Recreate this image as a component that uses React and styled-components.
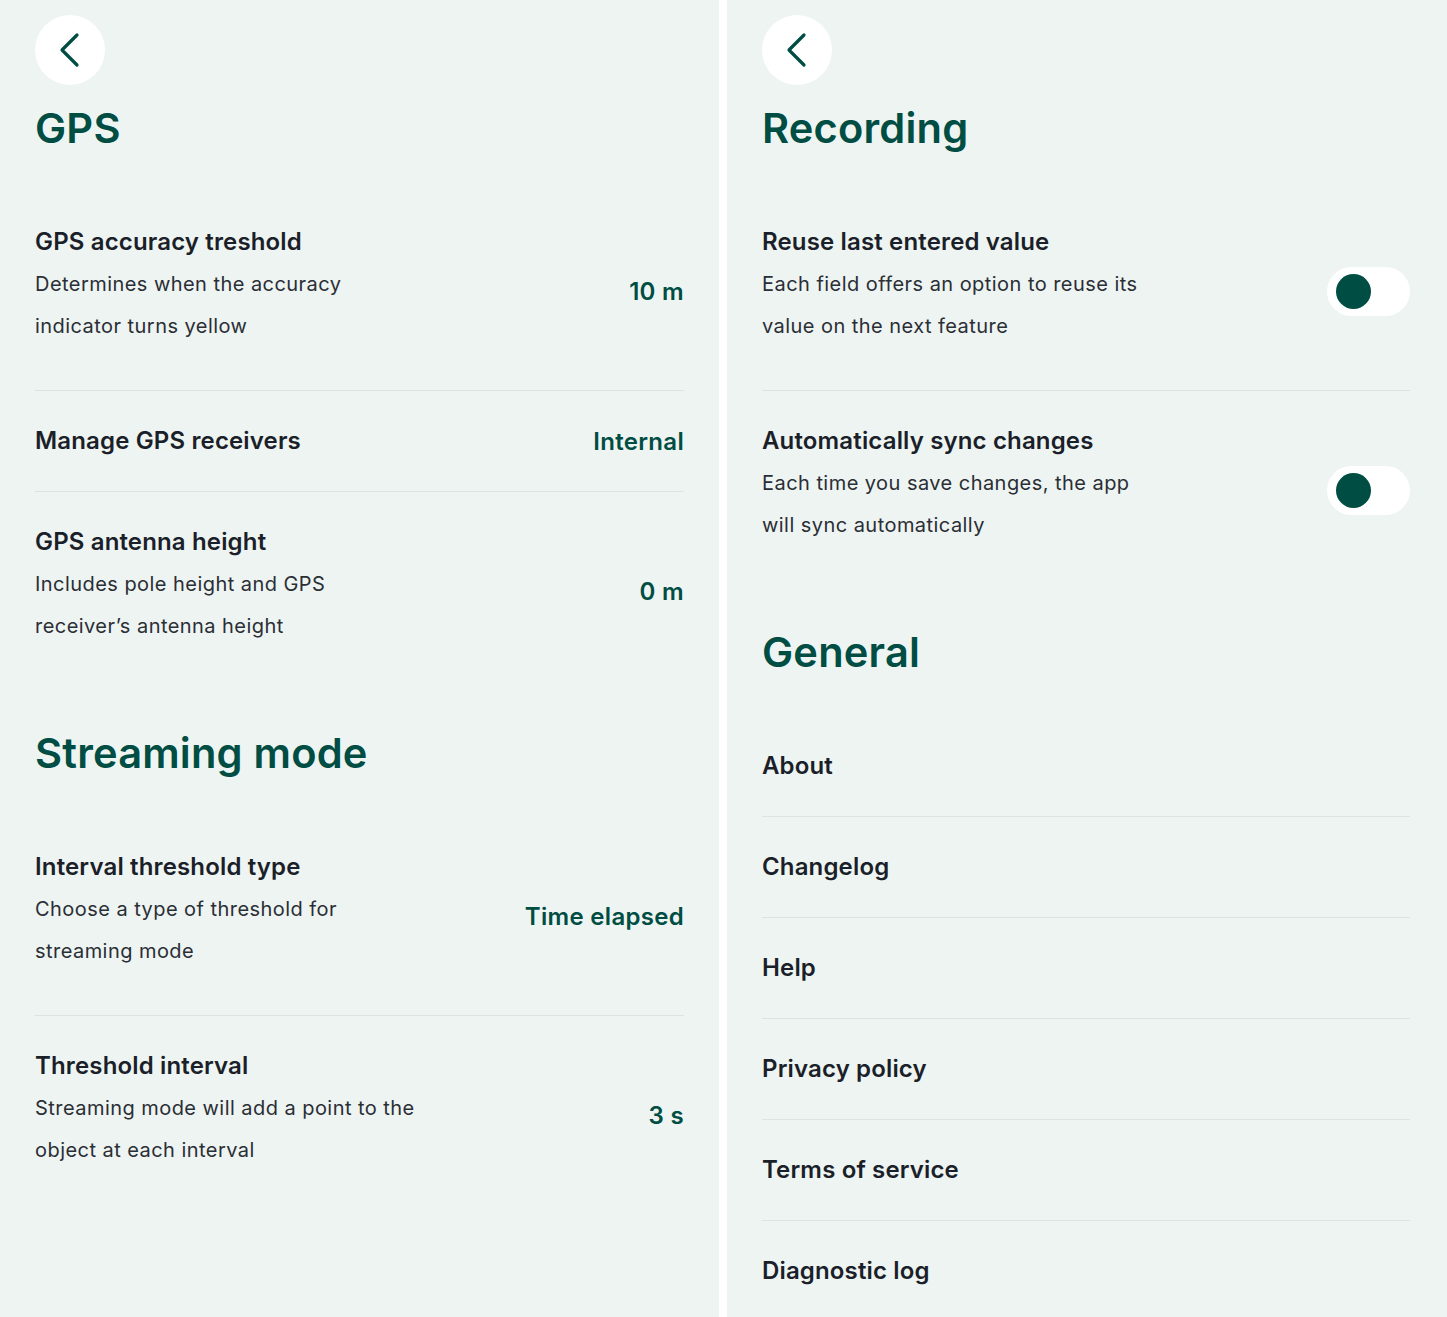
import React from "react";
import styled, { createGlobalStyle } from "styled-components";

const GREEN = "#004d43";
const BG = "#eef4f2";

const Global = createGlobalStyle`
  html, body { margin: 0; padding: 0; background: #ffffff; }
  body { font-family: Inter, "Noto Sans", sans-serif; -webkit-font-smoothing: antialiased; }
  * { box-sizing: border-box; }
`;

const Page = styled.div`
  display: grid;
  grid-template-columns: 719px 720px;
  column-gap: 8px;
  width: 1447px;
  height: 1317px;
  overflow: hidden;
  background: #ffffff;
`;

const Panel = styled.section`
  background: ${BG};
  padding: 15px ${(p) => p.$right}px 0 35px;
  display: flex;
  flex-direction: column;
  overflow: hidden;
`;

const BackButton = styled.button`
  width: 70px;
  height: 70px;
  border-radius: 50%;
  border: none;
  background: #ffffff;
  display: flex;
  align-items: center;
  justify-content: center;
  padding: 0;
  flex-shrink: 0;
`;

const SectionTitle = styled.h1`
  margin: ${(p) => (p.$first ? 18 : 38)}px 0 39px;
  font-size: 41.6px;
  line-height: 50px;
  font-weight: 600;
  color: ${GREEN};
  letter-spacing: 0.2px;
`;

const List = styled.div`
  display: flex;
  flex-direction: column;
`;

const Row = styled.div`
  display: flex;
  align-items: center;
  justify-content: space-between;
  padding: 29px 0;
  border-top: ${(p) => (p.$divider ? "1px solid #dde3e1" : "none")};
`;

const TextBlock = styled.div`
  display: flex;
  flex-direction: column;
  padding-bottom: ${(p) => (p.$hasDesc ? 14 : 0)}px;
`;

const RowTitle = styled.div`
  font-size: 24px;
  line-height: 42px;
  font-weight: 600;
  color: #1b1f29;
  letter-spacing: 0.15px;
`;

const RowDesc = styled.div`
  font-size: 20px;
  line-height: 42px;
  font-weight: 400;
  color: #2a2e35;
  letter-spacing: 0.45px;
`;

const Value = styled.div`
  font-size: 24px;
  font-weight: 600;
  color: ${GREEN};
  letter-spacing: 0.3px;
  white-space: nowrap;
`;

const Toggle = styled.div`
  width: 83px;
  height: 49px;
  border-radius: 25px;
  background: #ffffff;
  display: flex;
  align-items: center;
  padding-left: 9px;
  flex-shrink: 0;
`;

const Knob = styled.div`
  width: 35px;
  height: 35px;
  border-radius: 50%;
  background: ${GREEN};
`;

const Chevron = () => (
  <svg width="28" height="36" viewBox="0 0 28 36" fill="none">
    <path d="M21 3 L6 18 L21 33" stroke={GREEN} strokeWidth="3.2" strokeLinecap="round" strokeLinejoin="round" />
  </svg>
);

const SettingRow = ({ title, desc, value, toggle, divider }) => (
  <Row $divider={divider}>
    <TextBlock $hasDesc={!!desc}>
      <RowTitle>{title}</RowTitle>
      {desc && <RowDesc>{desc}</RowDesc>}
    </TextBlock>
    {value && <Value>{value}</Value>}
    {toggle && (
      <Toggle>
        <Knob />
      </Toggle>
    )}
  </Row>
);

export default function App() {
  return (
    <>
      <Global />
      <Page>
        <Panel $right={35}>
          <BackButton aria-label="Back">
            <Chevron />
          </BackButton>
          <SectionTitle $first>GPS</SectionTitle>
          <List>
            <SettingRow
              title="GPS accuracy treshold"
              desc={<>Determines when the accuracy<br />indicator turns yellow</>}
              value="10 m"
            />
            <SettingRow divider title="Manage GPS receivers" value="Internal" />
            <SettingRow
              divider
              title="GPS antenna height"
              desc={<>Includes pole height and GPS<br />receiver’s antenna height</>}
              value="0 m"
            />
          </List>
          <SectionTitle>Streaming mode</SectionTitle>
          <List>
            <SettingRow
              title="Interval threshold type"
              desc={<>Choose a type of threshold for<br />streaming mode</>}
              value="Time elapsed"
            />
            <SettingRow
              divider
              title="Threshold interval"
              desc={<>Streaming mode will add a point to the<br />object at each interval</>}
              value="3 s"
            />
          </List>
        </Panel>
        <Panel $right={37}>
          <BackButton aria-label="Back">
            <Chevron />
          </BackButton>
          <SectionTitle $first>Recording</SectionTitle>
          <List>
            <SettingRow
              title="Reuse last entered value"
              desc={<>Each field offers an option to reuse its<br />value on the next feature</>}
              toggle
            />
            <SettingRow
              divider
              title="Automatically sync changes"
              desc={<>Each time you save changes, the app<br />will sync automatically</>}
              toggle
            />
          </List>
          <SectionTitle>General</SectionTitle>
          <List>
            <SettingRow title="About" />
            <SettingRow divider title="Changelog" />
            <SettingRow divider title="Help" />
            <SettingRow divider title="Privacy policy" />
            <SettingRow divider title="Terms of service" />
            <SettingRow divider title="Diagnostic log" />
          </List>
        </Panel>
      </Page>
    </>
  );
}
